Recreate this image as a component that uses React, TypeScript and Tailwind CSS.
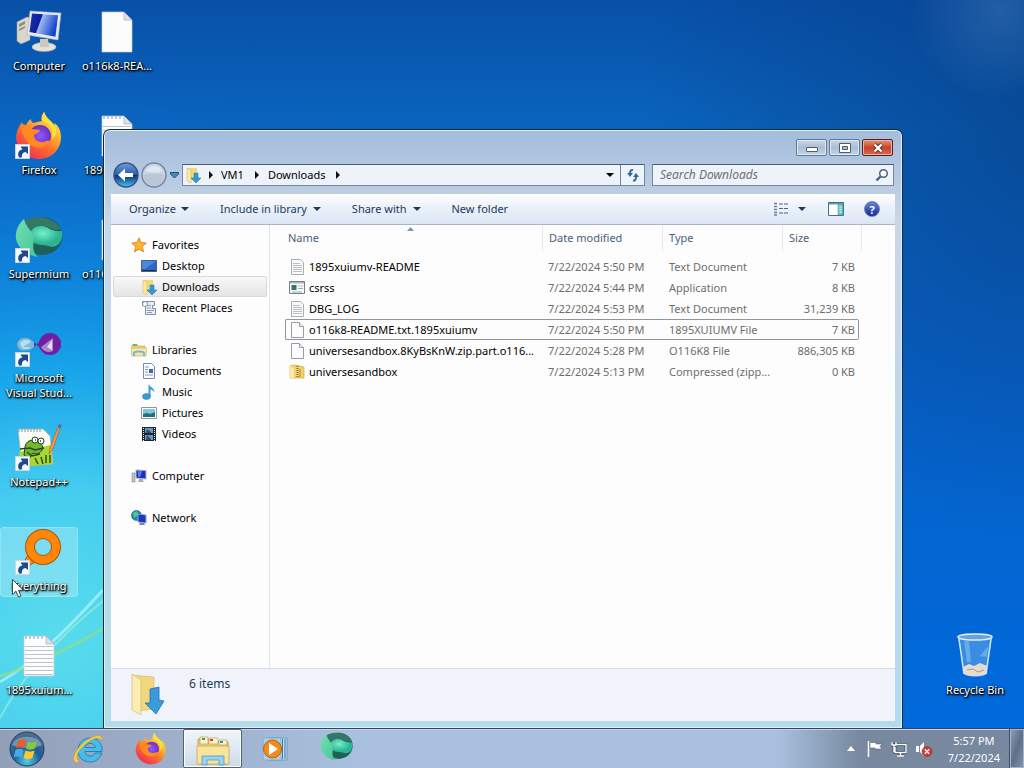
import type { ReactNode } from "react"
import clsx from "clsx"

/* ---------- shared pieces ---------- */

function Caret({ className }: { className?: string }) {
  return (
    <svg viewBox="0 0 8 4" className={clsx("h-1 w-2 shrink-0", className)}>
      <path d="M0 0h8L4 4z" fill="currentColor" />
    </svg>
  )
}

function CrumbArrow() {
  return (
    <svg viewBox="0 0 4 8" className="h-2 w-1 shrink-0">
      <path d="M0 0l4 4-4 4z" fill="#111" />
    </svg>
  )
}

function Shortcut() {
  return (
    <svg viewBox="0 0 15 15" className="absolute bottom-px left-0 h-[15px] w-[15px]">
      <path d="M0.500 0.500h14v14h-14z" fill="#f4f7fb" stroke="#cdd5df" />
      <path d="M4 13.500C2 9 4 6 7.500 5.500L5.500 2.500h7.500v7.500l-2.500-2C8 8.500 6.500 10 7 13.500z" fill="#1d4a8c" />
    </svg>
  )
}

/* ---------- large icons ---------- */

function ComputerArt() {
  return (
    <svg viewBox="0 0 48 48" className="h-12 w-12">
      <defs>
        <linearGradient id="screen" x1="0" y1="0" x2="1" y2="0.300">
          <stop offset="0" stopColor="#1b34b4" />
          <stop offset="0.420" stopColor="#0a1f9a" />
          <stop offset="0.460" stopColor="#9db8f2" />
          <stop offset="1" stopColor="#1544cf" />
        </linearGradient>
      </defs>
      <path d="M2 14l10-5 3 1v22l-9 4-4-3z" fill="#d9d6cb" stroke="#a5a294" strokeWidth="0.500" />
      <path d="M4 16l6-3v3l-6 3zM4 21l6-3v2l-6 3z" fill="#8f8d83" />
      <ellipse cx="29" cy="39" rx="12" ry="4.500" fill="#e2e2d8" stroke="#a8a89c" strokeWidth="0.500" />
      <path d="M25 31h8l1 8h-9z" fill="#c9c9be" />
      <path d="M15 3l31 2-3 27-31-5z" fill="#e6e8ea" stroke="#a9b0b8" strokeWidth="0.600" />
      <path d="M17 5.500l26 1.700-2.500 21.500L14.500 24z" fill="url(#screen)" />
    </svg>
  )
}

function FirefoxArt({ className }: { className: string }) {
  return (
    <svg viewBox="0 0 48 48" className={className}>
      <defs>
        <linearGradient id="fox" x1="0.900" y1="0" x2="0.200" y2="1">
          <stop offset="0" stopColor="#fff04a" />
          <stop offset="0.350" stopColor="#ffb52e" />
          <stop offset="0.600" stopColor="#ff6f2c" />
          <stop offset="1" stopColor="#ee2659" />
        </linearGradient>
        <radialGradient id="globe">
          <stop offset="0" stopColor="#9059ff" />
          <stop offset="1" stopColor="#6a2fc4" />
        </radialGradient>
      </defs>
      <path
        d="M29 0c-2 3-3 6-2 9l-9 2c-2-1-2-3-2-4-3 2-4 4-5 6-2 0-4-1-4-3C3 15 1 21 1 26c1 12 11 21 23 21s22-9 22-22c0-7-3-12-7-14l1 5C37 8 32 8 29 0z"
        fill="url(#fox)"
      />
      <circle cx="25" cy="24" r="11" fill="url(#globe)" />
      <path d="M6 14c5-1 9 0 11 3l8 1c-1 3-5 4-6 5 0 4 3 7 7 7 4 1 6-3 9-1-3 6-9 8-15 6C12 33 8 25 6 14z" fill="#ff8a22" />
      <path d="M27 9c8 2 12 9 10 18 4-3 5-7 4-11-3-7-9-8-12-16-2 3-3 6-2 9z" fill="#ffdf3d" />
    </svg>
  )
}

function SupermiumArt({ className }: { className: string }) {
  return (
    <svg viewBox="0 0 48 42" className={className}>
      <defs>
        <radialGradient id="sup" cx="0.400" cy="0.350">
          <stop offset="0" stopColor="#75f0c8" />
          <stop offset="1" stopColor="#2bb594" />
        </radialGradient>
        <linearGradient id="leaf" x1="0" y1="0" x2="1" y2="1">
          <stop offset="0" stopColor="#75ddb4" />
          <stop offset="1" stopColor="#42c698" />
        </linearGradient>
      </defs>
      <ellipse cx="27" cy="20" rx="20.500" ry="19" fill="#1f6058" />
      <path d="M9 5c10-7 29-5 37 8-8 3-12-3-20-3-6 0-10 3-12 6z" fill="#34786a" />
      <path d="M15 20c0-7 5-10 11-10 7 0 9 6 21 5 1 8-2 13-6 15-5 2-8-1-14-1-7 0-12-4-12-9z" fill="url(#sup)" />
      <path d="M9 3C3 8 0 16 1 23c2 9 10 16 22 18-8-7-3-14-5-21-1-6-7-8-9-17z" fill="url(#leaf)" />
    </svg>
  )
}

function VisualStudioArt() {
  return (
    <svg viewBox="0 0 48 48" className="h-12 w-12">
      <path d="M20 23C15 16 3 16 2 24c0 8 11 9 18 2l6-6c7-7 20-6 20 4s-14 12-21 4z" fill="#6d249b" />
      <path d="M19 22C14 16 3 16 2 24c0 8 11 9 17 3z" fill="#75b9df" />
      <path d="M5 23c3-4 8-4 11-1l-8 5h8c-4 4-11 2-11-4z" fill="#b9ddec" />
      <circle cx="35" cy="24" r="11" fill="#6f1f9f" />
      <path d="M26 27l12-9v13c-5 2-9 1-12-4z" fill="#a987cf" />
      <path d="M32 27l5-7v10z" fill="#e8dcf4" />
    </svg>
  )
}

function NotepadPlusArt() {
  return (
    <svg viewBox="0 0 48 48" className="h-12 w-12">
      <path d="M3 5h25l7 7 3 28-31 2z" fill="#fbfcf6" stroke="#a8b3a8" strokeWidth="0.700" />
      <path d="M4 5v3m3-3v3m3-3v3m3-3v3m3-3v3m3-3v3m3-3v3m3-3v3" stroke="#819099" />
      <path d="M4 28l32-7 2 19-31 3z" fill="#a9d633" />
      <path d="M10 23c1-6 6-8 11-6 5 1 8 5 6 9s-6 4-9 3l-4 6-5-4z" fill="#71b92b" stroke="#24451c" />
      <circle cx="20" cy="16" r="3" fill="#fff" stroke="#243a20" />
      <circle cx="26" cy="17" r="3" fill="#fff" stroke="#243a20" />
      <path d="M20 16h1m4 1h1M5 25l10-1 5 2 9-2M12 28l5 4 8-2M20 34l3 6M26 33l2 7M31 31v8M35 31v8" stroke="#26441d" strokeWidth="1.400" fill="none" />
      <path d="M34 30l1-6L43 3l2 1-7 21z" fill="#f09a45" stroke="#a85c24" strokeWidth="0.600" />
      <path d="M43 3l1-3 3 1-2 4z" fill="#53719e" />
    </svg>
  )
}

function EverythingArt() {
  return (
    <svg viewBox="0 0 48 48" className="h-12 w-12">
      <path d="M15 24l-5 8 5 5 10-6z" fill="#ff8a0a" stroke="#a9560a" />
      <circle cx="28" cy="19" r="13" fill="none" stroke="#a9560a" strokeWidth="10" />
      <circle cx="28" cy="19" r="13" fill="none" stroke="#ff8608" strokeWidth="8" />
    </svg>
  )
}

function PageArt({ lined }: { lined?: boolean }) {
  return (
    <svg viewBox="0 0 48 48" className="h-12 w-12">
      <path d="M9 4h22l8 8v32H9z" fill="#fcfcfd" stroke="#c3c8cf" strokeWidth="0.700" />
      <path d="M31 4v8h8z" fill="#dde2e8" stroke="#a7adb5" strokeWidth="0.700" />
      {lined && (
        <>
          <path d="M10 14.500h28M10 18.500h28M10 22.500h28M10 26.500h28M10 30.500h28M10 34.500h28M10 38.500h28M10 42.500h28" stroke="#bac3cf" />
          <path d="M11 4v3m4-3v3m4-3v3m4-3v3m4-3v3" stroke="#929cab" />
        </>
      )}
    </svg>
  )
}

function RecycleArt() {
  return (
    <svg viewBox="0 0 48 48" className="h-12 w-12">
      <path d="M7 5h34l-5 37c-3 4-20 4-23 0z" fill="#8cc5f6" fillOpacity="0.400" />
      <path d="M12 35l6-3 5 2 6-3 7 3-1 8c-4 3-18 3-22 0z" fill="#e5dcd0" />
      <path d="M16 38l6-1 5 3 6-2" stroke="#a79b8d" fill="none" />
      <path d="M8 7l5 35M40 7l-5 35" stroke="#cce8ff" strokeWidth="1.500" />
      <path d="M13 9l3 21h4L18 9zM37 14L29 24l7 1z" fill="#d4edff" fillOpacity="0.300" />
      <ellipse cx="24" cy="5" rx="17" ry="3" fill="#66a2dc" stroke="#e2eef7" strokeWidth="1.500" />
    </svg>
  )
}

/* ---------- small icons ---------- */

type SmallIcon =
  | "star" | "desktop" | "downloads" | "recent" | "libraries" | "documents"
  | "music" | "pictures" | "videos" | "computer" | "network"
  | "text" | "app" | "blank" | "zip"

const smallArt: Record<SmallIcon, ReactNode> = {
  star: <path d="M8 .8l2.100 4.700 5.200.6-3.900 3.500 1.100 5.300L8 12.200l-4.500 2.700 1.100-5.300L.7 6.100l5.200-.6z" fill="#ffb52b" stroke="#d5791c" strokeWidth="0.800" />,
  desktop: (
    <>
      <path d="M.5 2.500h15v11H.5z" fill="#2d67c7" stroke="#49617d" />
      <path d="M1 3h14L4 11H1z" fill="#4a88dd" />
      <path d="M1 12h14v1H1z" fill="#1c2c46" />
    </>
  ),
  downloads: (
    <>
      <path d="M2 1h10v12H2z" fill="#f3d878" />
      <path d="M2 1l4 2v13l-4-2z" fill="#fbeaa4" stroke="#cfaf55" strokeWidth="0.500" />
      <path d="M9 6h4v5h3l-5 5-5-5h3z" fill="#3598d4" stroke="#1f70ae" strokeWidth="0.500" />
    </>
  ),
  recent: (
    <>
      <path d="M1.500 1.500h12v4h-2v3h3v6h-10v-9h-3z" fill="#e9eef3" stroke="#7f8f9f" />
      <path d="M6 5.500h4M6 8h4M6 10.500h7M6 12.500h5" stroke="#8c9cac" />
      <circle cx="4" cy="4" r="2.500" fill="#fff" stroke="#7f8f9f" />
    </>
  ),
  libraries: (
    <>
      <path d="M1 3h5l1 1h7v9H1z" fill="#ecd37d" stroke="#b9a04e" strokeWidth="0.600" />
      <path d="M2 2h4v2H2z" fill="#70b558" />
      <path d="M0 6h16l-1 8H1z" fill="#f7e7a7" stroke="#c4ab5b" strokeWidth="0.600" />
      <path d="M3 14v-3c0-2 10-2 10 0v3" fill="none" stroke="#71b7d8" strokeWidth="2" />
    </>
  ),
  documents: (
    <>
      <path d="M2.500.5h8l3 3v12h-11z" fill="#fbfcff" stroke="#7c8ca8" />
      <path d="M4 4h4M4 6.500h3M4 9h3M4 12h8" stroke="#7c9bcc" />
      <path d="M8 6h4v4H8z" fill="#4166ae" />
    </>
  ),
  music: (
    <>
      <path d="M8 .5c1 3 5.500 3 5.500 8-1-2-3-3-4-3v7H7.500V.5z" fill="#3f9dcc" />
      <ellipse cx="5.500" cy="12.500" rx="4" ry="3" fill="#35a0d2" stroke="#226f9c" strokeWidth="0.500" />
    </>
  ),
  pictures: (
    <>
      <path d="M.5 2.500h15v11H.5z" fill="#fff" stroke="#8797a5" />
      <path d="M2 4h12v8H2z" fill="#7cc8dd" />
      <path d="M2 9l4-1 3 1 5-2v5H2z" fill="#246f75" />
    </>
  ),
  videos: (
    <>
      <path d="M1 1h14v14H1z" fill="#1d2532" />
      <path d="M4 2h8v5H4zM4 9h8v5H4z" fill="#7098bd" />
      <path d="M6 3l4 3v1H5zM6 9l4 4v1H5z" fill="#344c72" />
      <path d="M2.500 2v13M13.500 2v13" stroke="#e6edf3" strokeDasharray="1 1" />
    </>
  ),
  computer: (
    <>
      <path d="M1 5h3v9H1z" fill="#c7c6b5" stroke="#77776b" strokeWidth="0.500" />
      <path d="M5 2l10 .5V11L5 10z" fill="#1c2fc4" stroke="#acb6c4" />
      <path d="M7 3l4 .3L9 9l-2-.3z" fill="#5a7ee6" />
      <path d="M8 11h4v2l2 1H7z" fill="#a9afb5" />
    </>
  ),
  network: (
    <>
      <circle cx="5.500" cy="5.500" r="5" fill="#188cad" stroke="#0e5c83" strokeWidth="0.600" />
      <path d="M2 3l4-2 1 4-4 3z" fill="#53c992" />
      <path d="M7 4l8 1v8l-8-1z" fill="#1f35c5" stroke="#93a3ce" />
      <path d="M9 13h4l1 2H8z" fill="#7f8994" />
    </>
  ),
  text: (
    <>
      <path d="M2.500.5h9l3 3v12h-12z" fill="#fbfbfb" stroke="#a9adb0" />
      <path d="M4 4.500h7M4 6.500h9M4 8.500h9M4 10.500h9M4 12.500h9" stroke="#b9bec3" />
    </>
  ),
  app: (
    <>
      <path d="M.5 1.500h15v12H.5z" fill="#f9fbfb" stroke="#6f8088" />
      <path d="M1 2h14v1.500H1z" fill="#a8b7bf" />
      <path d="M2.500 5h5v5h-5z" fill="#34736f" />
      <path d="M9 6h2m1 0h2M9 8.500h5M3 12h10" stroke="#9baeb5" />
    </>
  ),
  blank: (
    <>
      <path d="M2.500.5h8l4 4v11h-12z" fill="#fdfdfd" stroke="#999da1" />
      <path d="M10.500.5v4h4" fill="#ebeef0" stroke="#999da1" />
    </>
  ),
  zip: (
    <>
      <path d="M1 2l5-1 9 2v11H1z" fill="#f2d26a" stroke="#c39e3f" strokeWidth="0.600" />
      <path d="M1 2l4 2v11l-4-1z" fill="#fbe9a2" />
      <path d="M8.500 2v12" stroke="#76704f" strokeWidth="2" strokeDasharray="1 1" />
      <path d="M11 5v8" stroke="#a28742" />
    </>
  ),
}

function Icon({ name }: { name: SmallIcon }) {
  return (
    <svg viewBox="0 0 16 16" className="h-4 w-4 shrink-0">
      {smallArt[name]}
    </svg>
  )
}

/* ---------- desktop ---------- */

type DesktopItemProps = {
  label: string
  shortcut?: boolean
  selected?: boolean
  children: ReactNode
}

function DesktopItem({ label, shortcut, selected, children }: DesktopItemProps) {
  return (
    <button
      type="button"
      className={clsx(
        "flex h-[68px] w-[76px] flex-col items-center gap-[2px]",
        selected && "rounded-xs bg-white/25 outline outline-white/40"
      )}>
      <span className="relative block h-12 w-12">
        {children}
        {shortcut && <Shortcut />}
      </span>
      <span className="text-center leading-[15px] whitespace-pre text-white [text-shadow:1px_1px_1px_#000,1px_1px_3px_#000,0_1px_2px_#000]">
        {label}
      </span>
    </button>
  )
}

function Wallpaper() {
  return (
    <svg viewBox="0 0 1024 728" preserveAspectRatio="none" className="absolute inset-0 h-full w-full">
      <defs>
        <linearGradient id="sky" x1="0" y1="0" x2="0" y2="1">
          <stop offset="0" stopColor="#0850a8" />
          <stop offset="0.180" stopColor="#0a65be" />
          <stop offset="0.500" stopColor="#0762c8" />
          <stop offset="1" stopColor="#006adc" />
        </linearGradient>
        <radialGradient id="glow" gradientUnits="userSpaceOnUse" cx="60" cy="640" r="600">
          <stop offset="0" stopColor="#58dcec" />
          <stop offset="0.250" stopColor="#45cdf0" />
          <stop offset="0.450" stopColor="#18a4ea" />
          <stop offset="0.650" stopColor="#0e84dc" stopOpacity="0.800" />
          <stop offset="1" stopColor="#0a58bc" stopOpacity="0" />
        </radialGradient>
        <radialGradient id="corner" gradientUnits="userSpaceOnUse" cx="1060" cy="120" r="420">
          <stop offset="0" stopColor="#063a80" stopOpacity="0.650" />
          <stop offset="1" stopColor="#063a80" stopOpacity="0" />
        </radialGradient>
        <radialGradient id="haze" gradientUnits="userSpaceOnUse" cx="1000" cy="10" r="90">
          <stop offset="0" stopColor="#6fa4cf" stopOpacity="0.250" />
          <stop offset="1" stopColor="#6fa4cf" stopOpacity="0" />
        </radialGradient>
      </defs>
      <path d="M0 0h1024v728H0z" fill="url(#sky)" />
      <path d="M0 0h1024v728H0z" fill="url(#glow)" />
      <path d="M0 0h1024v728H0z" fill="url(#corner)" />
      <path d="M0 0h1024v728H0z" fill="url(#haze)" />
      <path d="M0 682C30 665 62 635 103 590" stroke="#c4f8ff" strokeOpacity="0.600" strokeWidth="3" fill="none" />
      <path d="M0 676C40 664 75 645 104 628" stroke="#8fdf80" strokeOpacity="0.700" strokeWidth="3" fill="none" />
      <path d="M0 718C20 680 55 640 104 600" stroke="#b8f5d0" strokeOpacity="0.500" strokeWidth="2" fill="none" />
    </svg>
  )
}

/* ---------- explorer window ---------- */

const places: { label: string; icon: SmallIcon; child?: boolean; active?: boolean }[][] = [
  [
    { label: "Favorites", icon: "star" },
    { label: "Desktop", icon: "desktop", child: true },
    { label: "Downloads", icon: "downloads", child: true, active: true },
    { label: "Recent Places", icon: "recent", child: true },
  ],
  [
    { label: "Libraries", icon: "libraries" },
    { label: "Documents", icon: "documents", child: true },
    { label: "Music", icon: "music", child: true },
    { label: "Pictures", icon: "pictures", child: true },
    { label: "Videos", icon: "videos", child: true },
  ],
  [{ label: "Computer", icon: "computer" }],
  [{ label: "Network", icon: "network" }],
]

const files: { name: string; icon: SmallIcon; date: string; type: string; size: string; focused?: boolean }[] = [
  { name: "1895xuiumv-README", icon: "text", date: "7/22/2024 5:50 PM", type: "Text Document", size: "7 KB" },
  { name: "csrss", icon: "app", date: "7/22/2024 5:44 PM", type: "Application", size: "8 KB" },
  { name: "DBG_LOG", icon: "text", date: "7/22/2024 5:53 PM", type: "Text Document", size: "31,239 KB" },
  { name: "o116k8-README.txt.1895xuiumv", icon: "blank", date: "7/22/2024 5:50 PM", type: "1895XUIUMV File", size: "7 KB", focused: true },
  { name: "universesandbox.8KyBsKnW.zip.part.o116...", icon: "blank", date: "7/22/2024 5:28 PM", type: "O116K8 File", size: "886,305 KB" },
  { name: "universesandbox", icon: "zip", date: "7/22/2024 5:13 PM", type: "Compressed (zipp...", size: "0 KB" },
]

function CaptionButtons() {
  const glass =
    "flex h-[17px] w-[31px] items-center justify-center rounded-[2px] border border-[#66788f] bg-linear-to-b from-[#c9d7e8] via-[#a9bdd5] to-[#c2d4e8] inset-shadow-[0_0_0_1px_#dfe9f4]"
  return (
    <div className="flex justify-end gap-[2px] pt-[9px]">
      <button type="button" aria-label="Minimize" className={glass}>
        <span className="mt-1 h-[5px] w-3 rounded-[1px] border border-[#4d5c70] bg-white" />
      </button>
      <button type="button" aria-label="Maximize" className={glass}>
        <svg viewBox="0 0 12 10" className="h-[10px] w-3">
          <path d="M0.500 0.500h11v9H0.500z" fill="#fff" stroke="#4d5c70" />
          <path d="M3.500 3.500h5v3h-5z" fill="#a9bdd5" stroke="#4d5c70" />
        </svg>
      </button>
      <button
        type="button"
        aria-label="Close"
        className="flex h-[17px] w-[31px] items-center justify-center rounded-[2px] border border-[#5c1d1d] bg-linear-to-b from-[#e0937f] via-[#c8432a] to-[#d5694c] inset-shadow-[0_0_0_1px_#eeb09f]">
        <svg viewBox="0 0 12 10" className="h-[10px] w-3">
          <path d="M2.500 1.500l7 7m0-7l-7 7" stroke="#5b2a2a" strokeWidth="4" />
          <path d="M2.500 1.500l7 7m0-7l-7 7" stroke="#fff" strokeWidth="2.400" />
        </svg>
      </button>
    </div>
  )
}

function AddressRow() {
  return (
    <div className="flex h-[30px] items-center pr-px">
      <button type="button" aria-label="Back" className="ml-[2px]">
        <svg viewBox="0 0 26 26" className="h-[26px] w-[26px]">
          <defs>
            <linearGradient id="back" x1="0" y1="0" x2="0" y2="1">
              <stop offset="0" stopColor="#6d9bdc" />
              <stop offset="0.480" stopColor="#2a5dae" />
              <stop offset="0.520" stopColor="#0a2f7e" />
              <stop offset="1" stopColor="#49c3f2" />
            </linearGradient>
          </defs>
          <circle cx="13" cy="13" r="12" fill="url(#back)" stroke="#3c5379" strokeWidth="1.500" />
          <path d="M5 13l7-6.500v4.500h8v4h-8v4.500z" fill="#fff" />
        </svg>
      </button>
      <button type="button" aria-label="Forward" className="ml-[2px]">
        <svg viewBox="0 0 26 26" className="h-[26px] w-[26px]">
          <circle cx="13" cy="13" r="12" fill="#c9d5e2" stroke="#75869e" strokeWidth="1.500" />
          <path d="M2.500 13c6-2 15-2 21 0a10.500 10.500 0 0 1-21 0z" fill="#b9c8d6" />
          <path d="M5 9a9 9 0 0 1 16 0c-5 2-11 2-16 0z" fill="#dfe7ef" />
        </svg>
      </button>
      <button type="button" aria-label="Recent pages" className="ml-[3px] text-[#214d70]">
        <svg viewBox="0 0 9 7" className="h-[7px] w-[9px]">
          <path d="M0.500 0.500h8v1.500l-4 4-4-4z" fill="#4d8bb0" stroke="currentColor" />
        </svg>
      </button>

      <div className="ml-[3px] flex h-[22px] min-w-0 flex-1 items-center border border-[#7387a0] border-t-[#4a5d75] bg-[#eef3fa] pl-[2px]">
        <Icon name="downloads" />
        <nav aria-label="Address" className="ml-2 flex flex-1 items-center">
          <CrumbArrow />
          <button type="button" className="mr-[11px] ml-2">VM1</button>
          <CrumbArrow />
          <button type="button" className="mr-[11px] ml-[9px]">Downloads</button>
          <CrumbArrow />
        </nav>
        <button type="button" aria-label="Previous locations" className="flex h-full w-5 items-center justify-center">
          <Caret />
        </button>
        <button type="button" aria-label="Refresh" className="flex h-full w-6 items-center justify-center border-l border-[#7387a0]">
          <svg viewBox="0 0 14 14" className="h-[14px] w-[14px]" fill="none" stroke="#2c6f9e" strokeWidth="2">
            <path d="M7 2C5 1.500 4 3 4 6" />
            <path d="M1 5l3 4 3-4z" fill="#2c6f9e" stroke="none" />
            <path d="M7 12.500c2 .5 3-1 3-4" />
            <path d="M7 9l3-4 3 4z" fill="#2c6f9e" stroke="none" />
          </svg>
        </button>
      </div>

      <label className="ml-[7px] flex h-[22px] w-[242px] items-center border border-[#7387a0] border-t-[#4a5d75] bg-[#eef3fa] pr-1 pl-[7px]">
        <input
          type="search"
          aria-label="Search Downloads"
          placeholder="Search Downloads"
          className="min-w-0 flex-1 bg-transparent text-xs outline-none placeholder:text-[#6a6f78] placeholder:italic"
        />
        <svg viewBox="0 0 14 14" className="h-[14px] w-[14px]" fill="none" stroke="#47627f">
          <circle cx="8.500" cy="5.500" r="3.800" strokeWidth="1.500" fill="#fff" />
          <path d="M5.500 8.500L1.500 12.500" strokeWidth="2.400" />
        </svg>
      </label>
    </div>
  )
}

function Toolbar() {
  return (
    <div className="flex h-[31px] shrink-0 items-center border-b border-[#a9b6c9] bg-linear-to-b from-white via-[#e9f0fa] to-[#dbe5f3] px-[18px] text-[#1e395b]">
      <div className="flex gap-[31px]">
        <button type="button" className="flex items-center gap-[5px]">
          Organize <Caret />
        </button>
        <button type="button" className="flex items-center gap-[6px]">
          Include in library <Caret />
        </button>
        <button type="button" className="flex items-center gap-[6px]">
          Share with <Caret />
        </button>
        <button type="button">New folder</button>
      </div>

      <button type="button" aria-label="Change your view" className="ml-auto">
        <svg viewBox="0 0 16 14" className="h-[14px] w-4" fill="none">
          <path d="M1 1.500h3M1 4.500h3M1 7.500h3M1 10.500h3M1 13h3" stroke="#6d7f9a" strokeWidth="1.500" />
          <path d="M6 2h4m1 0h4M6 6.500h4m1 0h4M6 11h4m1 0h4" stroke="#4b648c" />
        </svg>
      </button>
      <button type="button" aria-label="More view options" className="ml-[9px]">
        <Caret />
      </button>
      <button type="button" aria-label="Show the preview pane" className="ml-[22px]">
        <svg viewBox="0 0 16 14" className="h-[14px] w-4">
          <path d="M0.500 0.500h15v13H0.500z" fill="#fff" stroke="#406f7d" />
          <path d="M1 1h14v1.500H1z" fill="#6b9ba8" />
          <path d="M10 2.500h5V13h-5z" fill="#6cc5d6" stroke="#40899b" strokeWidth="0.500" />
          <path d="M11.500 5h2m-2 2.500h2m-2 2.500h2" stroke="#fff" />
        </svg>
      </button>
      <button
        type="button"
        aria-label="Get help"
        className="mr-[-3px] ml-5 flex h-4 w-4 items-center justify-center rounded-full border border-[#6f7cae] bg-linear-to-b from-[#6484d8] to-[#16299a] leading-none font-bold text-white">
        ?
      </button>
    </div>
  )
}

function Places() {
  return (
    <nav aria-label="Places" className="flex w-[159px] shrink-0 flex-col gap-[21px] border-r border-[#dde5f0] px-[2px] pt-[9px]">
      {places.map((group) => (
        <ul key={group[0].label}>
          {group.map((place) => (
            <li key={place.label}>
              <a
                href="#"
                className={clsx(
                  "flex h-[21px] items-center gap-[5px] rounded-[2px] border",
                  place.child ? "pl-[27px]" : "pl-[17px]",
                  place.active ? "border-[#d9d9d9] bg-linear-to-b from-[#f8f8f8] to-[#e5e5e5]" : "border-transparent"
                )}>
                <Icon name={place.icon} />
                {place.label}
              </a>
            </li>
          ))}
        </ul>
      ))}
    </nav>
  )
}

function FileList() {
  const head = "h-[26px] border-r border-[#e3e9f2] pl-[6px] text-left font-normal"
  return (
    <div className="min-w-0 flex-1 overflow-hidden pl-[15px]">
      <table className="w-[577px] table-fixed border-separate border-spacing-0 text-[#6d6d6d]">
        <colgroup>
          <col className="w-[258px]" />
          <col className="w-[120px]" />
          <col className="w-[120px]" />
          <col className="w-[76px]" />
          <col className="w-[3px]" />
        </colgroup>
        <thead className="text-[#4c607a]">
          <tr>
            <th className="relative h-[26px] border-r border-[#e3e9f2] pl-[3px] text-left font-normal">
              Name
              <svg viewBox="0 0 7 4" className="absolute top-[2px] left-[122px] h-1 w-[7px]">
                <path d="M0 4l3.500-4L7 4z" fill="#7f93ab" />
              </svg>
            </th>
            <th className={head}>Date modified</th>
            <th className={head}>Type</th>
            <th className="h-[26px] pl-[6px] text-left font-normal">Size</th>
            <td className="border-r border-[#e3e9f2]" />
          </tr>
          <tr>
            <td colSpan={5} className="h-[5px]" />
          </tr>
        </thead>
        <tbody>
          {files.map((file) => {
            const edge = file.focused ? "border-[#8e959c]" : "border-transparent"
            return (
              <tr key={file.name} className="h-[21px] leading-[19px]">
                <td className={clsx("rounded-l-[2px] border-y border-l pl-[3px] text-black", edge)}>
                  <span className="flex items-center gap-1 whitespace-nowrap">
                    <Icon name={file.icon} />
                    {file.name}
                  </span>
                </td>
                <td className={clsx("border-y pl-[5px] whitespace-nowrap", edge)}>{file.date}</td>
                <td className={clsx("border-y pl-[6px] whitespace-nowrap", edge)}>{file.type}</td>
                <td className={clsx("rounded-r-[2px] border-y border-r pr-[3px] text-right whitespace-nowrap", edge)}>
                  {file.size}
                </td>
                <td />
              </tr>
            )
          })}
        </tbody>
      </table>
    </div>
  )
}

function Explorer() {
  return (
    <section
      aria-label="Downloads"
      className="absolute top-[129px] right-[121px] bottom-0 left-[103px] flex flex-col rounded-t-[7px] border border-b-0 border-[#152a45] bg-linear-to-b from-[#a3bddb] via-[#c8d6e8] via-15% to-[#b2dcec] px-[7px] pb-[7px] inset-shadow-[0_0_0_1px_#e3f0fa]">
      <div className="h-[30px] shrink-0 pr-[2px]">
        <CaptionButtons />
      </div>
      <AddressRow />
      <div className="mt-1 flex min-h-0 flex-1 flex-col bg-[#fdfdfd]">
        <Toolbar />
        <div className="flex min-h-0 flex-1">
          <Places />
          <FileList />
        </div>
        <footer className="flex h-[53px] shrink-0 gap-[23px] border-t border-[#d4dbe8] bg-[#f0f4fa] pl-[19px] text-xs text-[#1e395b]">
          <svg viewBox="0 0 36 44" className="mt-1 h-11 w-9">
            <path d="M2 2l22 2v32l-16 2z" fill="#f0d780" stroke="#d7b961" strokeWidth="0.600" />
            <path d="M2 1l9 6v35l-9-5z" fill="#fbedb3" stroke="#d4b45c" strokeWidth="0.600" />
            <path d="M20 16l9-2v13l5 1-8 13-11-11h5z" fill="#3a9bdc" stroke="#2471b0" strokeWidth="0.800" />
          </svg>
          <p className="pt-[7px]">6 items</p>
        </footer>
      </div>
    </section>
  )
}

/* ---------- taskbar ---------- */

function Taskbar() {
  const slot = "flex h-full w-[59px] items-center justify-center"
  return (
    <footer className="flex h-10 shrink-0 items-stretch border-t border-[#34445c] bg-[linear-gradient(to_right,#929fb8_0%,#9fb0cc_18%,#a8c0de_35%,#a8c0de_76%,#77889f_84%,#77889f_100%)] inset-shadow-[0_1px_0_#c6d4e6]">
      <button type="button" aria-label="Start" className="mr-[6px] flex w-[53px] items-center justify-center">
        <svg viewBox="0 0 36 36" className="h-[36px] w-[36px]">
          <defs>
            <radialGradient id="orb" cx="0.500" cy="0.850" r="0.800">
              <stop offset="0" stopColor="#4fd1e8" />
              <stop offset="0.500" stopColor="#1c5b93" />
              <stop offset="1" stopColor="#4c6f90" />
            </radialGradient>
          </defs>
          <circle cx="18" cy="18" r="17" fill="url(#orb)" stroke="#25405f" />
          <path d="M3 14C7 3 29 3 33 14 26 18 11 18 3 14z" fill="#fff" fillOpacity="0.300" />
          <path d="M9 10c3-2 6-2 8-.5l-2 7.500c-3-1.500-5-1.500-8 0z" fill="#f1592a" />
          <path d="M19 10.500c3 1.500 5 1.500 9-.5l-2 7.500c-3 1.500-6 1.500-9 0z" fill="#8cc63e" />
          <path d="M6.500 19c3-2 5-1.500 8 0l-2 7.500c-3-1.500-5-1.500-8 0z" fill="#4aa8e8" />
          <path d="M16.500 19.500c3 1.500 6 1.500 9 0l-2 7.500c-3 1.500-6 1.500-9 0z" fill="#fdc82f" />
        </svg>
      </button>
      <div className="flex gap-[3px]">
        <button type="button" aria-label="Internet Explorer" className={slot}>
          <svg viewBox="0 0 32 32" className="h-8 w-8">
            <path
              d="M29 20C27 26 22 29 17 29 10 29 5 24 5 17.500S10 5 17 5C25 5 30 11 29 18.500H12c0 5 8 6.500 10 1.500zM12 14.500h10.500c-1-5.500-9.500-5.500-10.500 0z"
              fill="#48bce9"
              stroke="#1d7cb8"
              strokeWidth="0.900"
              fillRule="evenodd"
            />
            <path d="M2 29C-3 23 9 8 20 4c6-2.500 10-1.500 9 4-2-5-8-3-15 2C5 17 1 25 6 28c-1 1-3 2-4 1z" fill="#f9d33a" stroke="#c99a1c" strokeWidth="0.500" />
          </svg>
        </button>
        <button type="button" aria-label="Firefox" className={slot}>
          <FirefoxArt className="h-8 w-8" />
        </button>
        <button
          type="button"
          aria-label="Windows Explorer"
          className="flex h-full w-[59px] items-center justify-center rounded-[2px] border border-[#4f6079] bg-linear-to-b from-[#f1f5fa] to-[#cddaeb] inset-shadow-[0_0_0_1px_#fff]">
          <svg viewBox="0 0 34 30" className="mt-1 h-[30px] w-[34px]">
            <path d="M2 3h10l2 3h18v22H2z" fill="#eed078" stroke="#b89540" strokeWidth="0.800" />
            <path d="M4 1h8v7H4zM13 2h9v6h-9zM23 4h8v5h-8z" fill="#f9f3d2" stroke="#b89540" strokeWidth="0.600" />
            <path d="M6 2h3v2H6z" fill="#3fa04a" />
            <path d="M14 3h3v2h-3z" fill="#d2402f" />
            <path d="M24 5h3v2h-3z" fill="#3c86cf" />
            <path d="M1 10h32v18H1z" fill="#f9e49c" stroke="#c9a84e" strokeWidth="0.800" />
            <path d="M6 29v-9h22v9h-5v-5H11v5z" fill="#9ad2ef" stroke="#4a9dcc" strokeWidth="0.800" />
          </svg>
        </button>
        <button type="button" aria-label="Windows Media Player" className={slot}>
          <svg viewBox="0 0 28 26" className="h-[26px] w-7">
            <path d="M8 2h18v22H8z" fill="#bfe0f3" stroke="#5b90b5" strokeWidth="0.800" />
            <path d="M24 3v20M21.500 3v20" stroke="#3c76a3" />
            <path d="M2 2h18v22H2z" fill="#a9d2ea" stroke="#78a6c4" strokeWidth="0.800" />
            <circle cx="11.500" cy="13" r="9" fill="#f28b1d" stroke="#bd5f0f" />
            <path d="M8 7v12l9-6z" fill="#fff" />
          </svg>
        </button>
        <button type="button" aria-label="Supermium" className={slot}>
          <SupermiumArt className="mb-1 h-[29px] w-[33px]" />
        </button>
      </div>

      <div className="ml-auto flex items-center text-white">
        <button type="button" aria-label="Show hidden icons">
          <svg viewBox="0 0 8 5" className="h-[5px] w-2">
            <path d="M0 5l4-5 4 5z" fill="#fff" />
          </svg>
        </button>
        <button type="button" aria-label="Action Center" className="ml-3">
          <svg viewBox="0 0 16 16" className="h-4 w-4">
            <path d="M1.500 0v16" stroke="#fff" strokeWidth="1.500" />
            <path d="M3 1.500h6v1.500h6l-2 2.500 2 2.500H8V7H3z" fill="#fff" stroke="#44546c" strokeWidth="0.500" />
          </svg>
        </button>
        <button type="button" aria-label="Network status" className="ml-2">
          <svg viewBox="0 0 16 16" className="h-4 w-4" fill="none">
            <path d="M5 3.500h10v8H4V6M9.500 12v2.500M6 15h7M1 1v3h4V1M3 4v7" stroke="#3a475c" strokeWidth="2.800" />
            <path d="M5 3.500h10v8H4V6M9.500 12v2.500M6 15h7M1 1v3h4V1M3 4v7" stroke="#fff" strokeWidth="1.400" />
          </svg>
        </button>
        <button type="button" aria-label="Volume, muted" className="ml-2">
          <svg viewBox="0 0 18 16" className="h-4 w-[18px]">
            <path d="M1 5h3v6H1z" fill="#fff" />
            <path d="M5 5l4-4v14l-4-4z" fill="#fff" />
            <circle cx="12" cy="10.500" r="5" fill="#d3362c" stroke="#9d231c" strokeWidth="0.500" />
            <path d="M9.800 8.300l4.400 4.400m0-4.400l-4.400 4.400" stroke="#fff" strokeWidth="1.500" />
          </svg>
        </button>
        <button type="button" className="ml-[15px] text-center leading-[17px]">
          <time dateTime="2024-07-22T17:57" className="block">
            5:57 PM
            <br />
            7/22/2024
          </time>
        </button>
        <button
          type="button"
          aria-label="Show desktop"
          className="ml-[9px] h-full w-[15px] border-l border-[#3f4f66] bg-linear-to-br from-[#91a2b9] via-[#5d6f89] to-[#8697ae] inset-shadow-[0_0_0_1px_#a6b5c9]"
        />
      </div>
    </footer>
  )
}

export default function App() {
  return (
    <div className="flex h-screen flex-col overflow-hidden bg-[#0866cc] font-['Noto_Sans',sans-serif] text-[11px] leading-4 text-black">
      <main className="relative min-h-0 flex-1">
        <Wallpaper />
        <div className="absolute top-2 left-px flex gap-[2px]">
          <div className="flex flex-col gap-9">
            <DesktopItem label="Computer"><ComputerArt /></DesktopItem>
            <DesktopItem label="Firefox" shortcut><FirefoxArt className="h-12 w-12" /></DesktopItem>
            <DesktopItem label="Supermium" shortcut><SupermiumArt className="h-[42px] w-12" /></DesktopItem>
            <DesktopItem label={"Microsoft\nVisual Stud..."} shortcut><VisualStudioArt /></DesktopItem>
            <DesktopItem label="Notepad++" shortcut><NotepadPlusArt /></DesktopItem>
            <DesktopItem label="Everything" shortcut selected><EverythingArt /></DesktopItem>
            <DesktopItem label="1895xuium..."><PageArt lined /></DesktopItem>
          </div>
          <div className="flex flex-col gap-9">
            <DesktopItem label="o116k8-REA..."><PageArt /></DesktopItem>
            <DesktopItem label="1895xuium..."><PageArt lined /></DesktopItem>
            <DesktopItem label="o116k8-REA..."><PageArt /></DesktopItem>
          </div>
        </div>
        <div className="absolute right-[11px] bottom-7">
          <DesktopItem label="Recycle Bin"><RecycleArt /></DesktopItem>
        </div>
        <Explorer />
        <svg viewBox="0 0 12 19" className="absolute top-[579px] left-3 h-[19px] w-3">
          <path d="M0.500 0.500v15l3.500-3.300 2.500 5.800 2.500-1-2.500-5.600h5z" fill="#fff" stroke="#222" strokeWidth="0.800" />
        </svg>
      </main>
      <Taskbar />
    </div>
  )
}
